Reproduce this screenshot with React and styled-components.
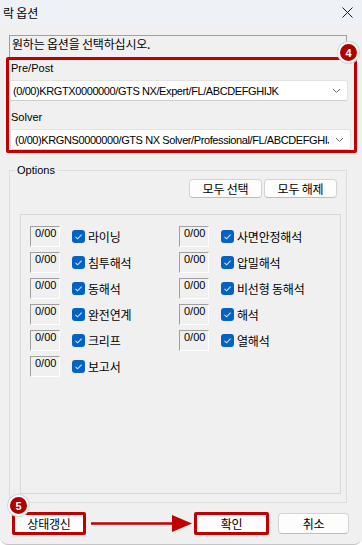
import React from 'react';
import styled, { createGlobalStyle } from 'styled-components';

const GlobalStyle = createGlobalStyle`
  html, body {
    margin: 0;
    padding: 0;
    background: #ffffff;
  }
  body {
    font-family: "Liberation Sans", "Noto Sans CJK KR", sans-serif;
    font-size: 11px;
    color: #000;
  }
  * { box-sizing: border-box; }
`;

const RED = '#c00000';

const Window = styled.div`
  width: 362px;
  height: 545px;
  background: #f0f0f0;
  border-radius: 0 0 8px 8px;
  border-bottom: 1px solid #c4c4c4;
  overflow: hidden;
  display: flex;
  flex-direction: column;
`;

const TitleBar = styled.div`
  height: 25px;
  flex: none;
  background: #eef1f5;
  display: flex;
  align-items: center;
  justify-content: space-between;
  padding: 0 9px 0 3px;
`;

const Korean = styled.span`
  font-family: "Noto Sans CJK KR", sans-serif;
  font-size: 12px;
  letter-spacing: -0.2px;
  line-height: 16px;
  white-space: nowrap;
`;

const Body = styled.div`
  display: flex;
  flex-direction: column;
  padding-top: 10px;
`;

const Instruction = styled.div`
  margin-left: 9px;
  width: 338px;
  height: 22px;
  border: 1px solid #a0a0a0;
  border-bottom: none;
  padding-left: 2px;
`;

const Marked = styled.div`
  position: relative;
  margin-left: 6px;
  width: 351px;
  border: 3px solid ${RED};
  border-radius: 2px;
  display: flex;
  flex-direction: column;
`;

const Badge = styled.div`
  position: absolute;
  width: 21px;
  height: 21px;
  border-radius: 50%;
  background: #b00000;
  border: 2px solid #ffffff;
  box-shadow: 0 0 0 1px #d8d8d8;
  color: #fff;
  font-family: "Liberation Sans", sans-serif;
  font-weight: bold;
  font-size: 11px;
  display: flex;
  align-items: center;
  justify-content: center;
  z-index: 2;
  top: ${p => p.$top}px;
  left: ${p => p.$left}px;
`;

const FieldLabel = styled.div`
  font-size: 11px;
  line-height: 16px;
  padding-left: 2px;
  margin-top: ${p => p.$mt || 0}px;
`;

const Combo = styled.div`
  margin-top: 4px;
  margin-left: ${p => p.$ml || 0}px;
  width: ${p => p.$w}px;
  height: 21px;
  background: #ffffff;
  border: 1px solid #e2e2e2;
  border-bottom-color: #cfcfcf;
  border-radius: 3px;
  display: flex;
  align-items: center;
  padding: 0 6px 0 ${p => p.$pl || 3}px;
`;

const ComboText = styled.div`
  flex: 1;
  overflow: hidden;
  white-space: nowrap;
  font-size: 11px;
  letter-spacing: -0.4px;
  line-height: 14px;
`;

const Chevron = () => (
  <svg width="9" height="6" viewBox="0 0 9 6" style={{ flex: 'none', marginLeft: 6 }}>
    <polyline points="1,1 4.5,4.5 8,1" fill="none" stroke="#6a6a6a" strokeWidth="1" />
  </svg>
);

const Group = styled.fieldset`
  margin: 10px 0 0 9px;
  width: 338px;
  border: 1px solid #dcdcdc;
  padding: 2px 9px 8px 10px;
  min-width: 0;
`;

const Legend = styled.legend`
  margin-left: -5px;
  padding: 0 2px;
  font-size: 11px;
  line-height: 14px;
`;

const TopButtons = styled.div`
  display: flex;
  justify-content: flex-end;
  gap: 2px;
`;

const Button = styled.button`
  width: ${p => p.$w}px;
  height: ${p => p.$h}px;
  margin: 0;
  padding: 0;
  background: #fdfdfd;
  border: ${p => (p.$marked ? `3px solid ${RED}` : '1px solid #d3d3d3')};
  border-bottom-color: ${p => (p.$marked ? RED : '#bdbdbd')};
  border-radius: ${p => (p.$marked ? 2 : 4)}px;
  font-family: "Noto Sans CJK KR", sans-serif;
  font-size: 12px;
  letter-spacing: -0.2px;
  line-height: 14px;
  color: #000;
  display: flex;
  align-items: center;
  justify-content: center;
  flex: none;
`;

const Panel = styled.div`
  margin-top: 16px;
  width: 321px;
  height: 280px;
  border: 1px solid #d8d8d8;
  padding: 11px 0 0 9px;
  display: grid;
  grid-template-columns: 149px auto;
  grid-auto-rows: 21px;
  row-gap: 5px;
  align-content: start;
`;

const Item = styled.div`
  display: flex;
  align-items: center;
`;

const NumBox = styled.div`
  width: 30px;
  height: 21px;
  border-top: 1px solid #a0a0a0;
  border-left: 1px solid #a0a0a0;
  border-right: 1px solid #ffffff;
  border-bottom: 1px solid #ffffff;
  padding: 0 0 0 4px;
  font-size: 11px;
  line-height: 13px;
  margin-right: 12px;
  flex: none;
`;

const Check = styled.span`
  width: 13px;
  height: 13px;
  border-radius: 3px;
  background: #0562c2;
  margin-right: 3px;
  display: flex;
  align-items: center;
  justify-content: center;
  flex: none;
`;

const CheckMark = () => (
  <svg width="13" height="13" viewBox="0 0 13 13">
    <polyline points="3.5,6.8 5.6,8.8 9.6,4.6" fill="none" stroke="#cfe3f7" strokeWidth="1.1" />
  </svg>
);

const Footer = styled.div`
  position: relative;
  margin-top: 9px;
  padding-left: 12px;
  display: flex;
  align-items: center;
`;

const Gap = styled.div`
  width: ${p => p.$w}px;
  flex: none;
`;

const Arrow = () => (
  <svg width="108" height="23" viewBox="0 0 108 23" style={{ flex: 'none' }}>
    <line x1="5" y1="11.5" x2="90" y2="11.5" stroke={RED} strokeWidth="2.5" />
    <polygon points="86,3 106,11.5 86,20" fill={RED} />
  </svg>
);

const items = [
  ['라이닝', '사면안정해석'],
  ['침투해석', '압밀해석'],
  ['동해석', '비선형 동해석'],
  ['완전연계', '해석'],
  ['크리프', '열해석'],
  ['보고서', null],
];

const Option = ({ label }) => (
  <Item>
    <NumBox>0/00</NumBox>
    <Check><CheckMark /></Check>
    <Korean>{label}</Korean>
  </Item>
);

export default function App() {
  return (
    <Window>
      <GlobalStyle />
      <TitleBar>
        <Korean>락 옵션</Korean>
        <svg width="11" height="11" viewBox="0 0 11 11">
          <path d="M0.5 0.5 L10.5 10.5 M10.5 0.5 L0.5 10.5" stroke="#1a1a1a" strokeWidth="1" />
        </svg>
      </TitleBar>
      <Body>
        <Instruction>
          <Korean>원하는 옵션을 선택하십시오.</Korean>
        </Instruction>
        <Marked>
          <Badge $top={-18} $left={329}>4</Badge>
          <FieldLabel>Pre/Post</FieldLabel>
          <Combo $w={339}>
            <ComboText>(0/00)KRGTX0000000/GTS NX/Expert/FL/ABCDEFGHIJK</ComboText>
            <Chevron />
          </Combo>
          <FieldLabel $mt={8}>Solver</FieldLabel>
          <Combo $w={341} $ml={1} $pl={4}>
            <ComboText>(0/00)KRGNS0000000/GTS NX Solver/Professional/FL/ABCDEFGHIJK</ComboText>
            <Chevron />
          </Combo>
        </Marked>
        <Group>
          <Legend>Options</Legend>
          <TopButtons>
            <Button $w={73} $h={19}>모두 선택</Button>
            <Button $w={73} $h={19}>모두 해제</Button>
          </TopButtons>
          <Panel>
            {items.map(([a, b]) => (
              <React.Fragment key={a}>
                <Option label={a} />
                {b ? <Option label={b} /> : <div />}
              </React.Fragment>
            ))}
          </Panel>
        </Group>
        <Footer>
          <Badge $top={-17} $left={8}>5</Badge>
          <Button $w={74} $h={23} $marked>상태갱신</Button>
          <Arrow />
          <Button $w={75} $h={23} $marked>확인</Button>
          <Gap $w={9} />
          <Button $w={71} $h={21}>취소</Button>
        </Footer>
      </Body>
    </Window>
  );
}
